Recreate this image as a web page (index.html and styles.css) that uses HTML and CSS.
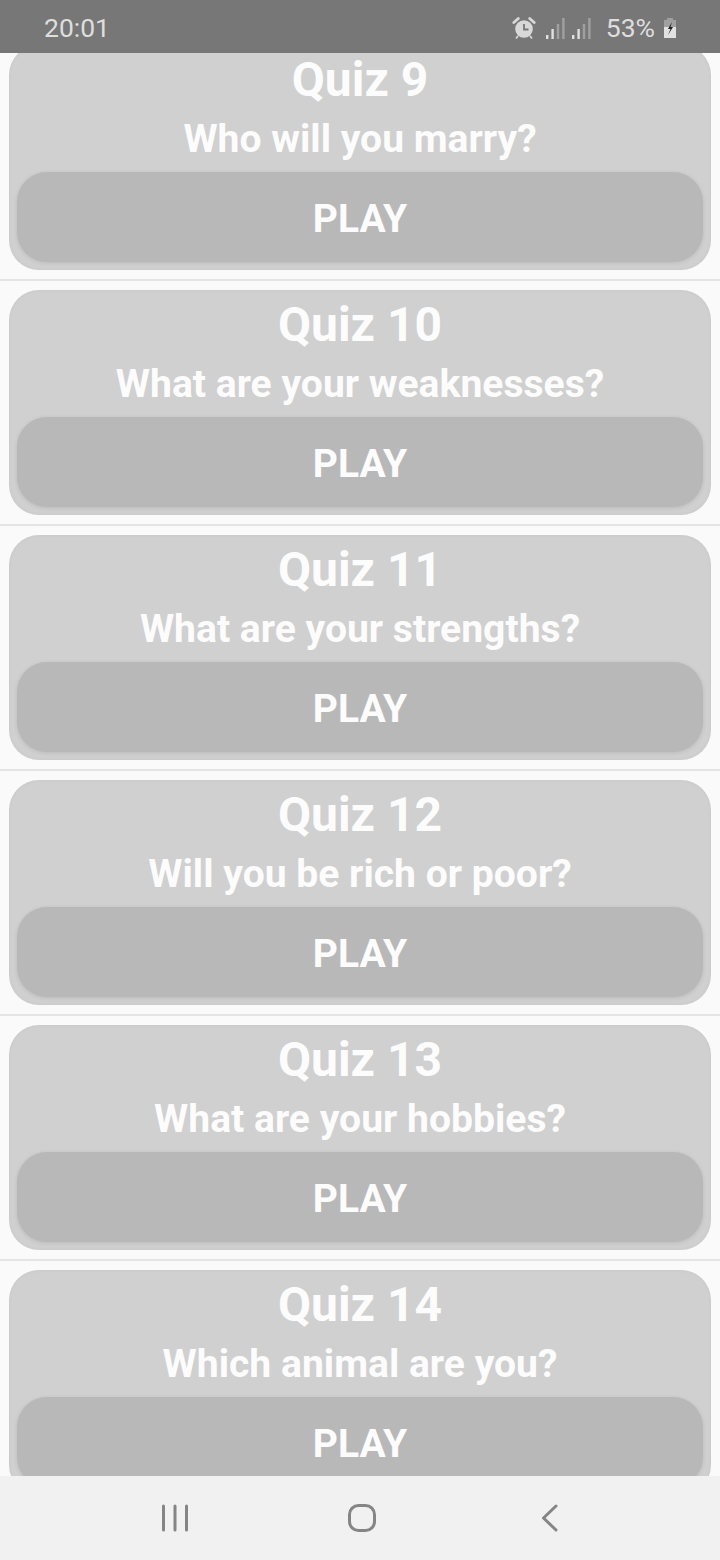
FILE: index.html
```html
<!DOCTYPE html>
<html lang="en">
<head>
    <meta charset="UTF-8">
    <meta name="viewport" content="width=device-width, initial-scale=1.0">
    <title>Quiz</title>
    <link rel="stylesheet" href="styles.css">
</head>
<body>

    <div class="status-bar">
        <span class="clock">20:01</span>
        <div class="status-icons">
            <svg class="alarm" width="24" height="24" viewBox="0 0 24 24">
                <circle cx="12" cy="13" r="8.8" fill="#d8d8d8"/>
                <path d="M12 8v5.5h4.5" fill="none" stroke="#777" stroke-width="1.8"/>
                <path d="M1.8 6.5l4.5-4M22.2 6.5l-4.5-4" stroke="#d8d8d8" stroke-width="2.8" stroke-linecap="round"/>
                <path d="M6 20l-2 2.5M18 20l2 2.5" stroke="#d8d8d8" stroke-width="1.8"/>
            </svg>
            <svg class="signal" width="20" height="22" viewBox="0 0 20 22">
                <rect x="1" y="18" width="2.4" height="4" fill="#e0e0e0"/>
                <rect x="6.4" y="12" width="2.4" height="10" fill="#e0e0e0"/>
                <rect x="11.8" y="7" width="2.4" height="15" fill="#a0a0a0"/>
                <rect x="17.2" y="1" width="2.4" height="21" fill="#a0a0a0"/>
            </svg>
            <svg class="signal" width="20" height="22" viewBox="0 0 20 22">
                <rect x="1" y="18" width="2.4" height="4" fill="#e0e0e0"/>
                <rect x="6.4" y="12" width="2.4" height="10" fill="#e0e0e0"/>
                <rect x="11.8" y="7" width="2.4" height="15" fill="#a0a0a0"/>
                <rect x="17.2" y="1" width="2.4" height="21" fill="#a0a0a0"/>
            </svg>
            <span class="percent">53%</span>
            <svg class="battery" width="14" height="22" viewBox="0 0 14 22">
                <path d="M4 1h6v2h3v18H1V3h3z" fill="#a0a0a0"/>
                <rect x="1" y="10" width="12" height="11" fill="#e2e2e2"/>
                <path d="M9 5L5 12h2.5L5 18l5-8H7.5z" fill="#222"/>
            </svg>
        </div>
    </div>

    <div class="quiz-list">
        <div class="quiz-item">
            <div class="quiz-card">
                <h1>Quiz 9</h1>
                <h2>Who will you marry?</h2>
                <div class="play-btn">PLAY</div>
            </div>
        </div>
        <div class="quiz-item">
            <div class="quiz-card">
                <h1>Quiz 10</h1>
                <h2>What are your weaknesses?</h2>
                <div class="play-btn">PLAY</div>
            </div>
        </div>
        <div class="quiz-item">
            <div class="quiz-card">
                <h1>Quiz 11</h1>
                <h2>What are your strengths?</h2>
                <div class="play-btn">PLAY</div>
            </div>
        </div>
        <div class="quiz-item">
            <div class="quiz-card">
                <h1>Quiz 12</h1>
                <h2>Will you be rich or poor?</h2>
                <div class="play-btn">PLAY</div>
            </div>
        </div>
        <div class="quiz-item">
            <div class="quiz-card">
                <h1>Quiz 13</h1>
                <h2>What are your hobbies?</h2>
                <div class="play-btn">PLAY</div>
            </div>
        </div>
        <div class="quiz-item">
            <div class="quiz-card">
                <h1>Quiz 14</h1>
                <h2>Which animal are you?</h2>
                <div class="play-btn">PLAY</div>
            </div>
        </div>
    </div>

    <div class="nav-bar">
        <svg width="30" height="30" viewBox="0 0 30 30">
            <path d="M3.5 3v24M15 3v24M26.5 3v24" stroke="#858585" stroke-width="3" stroke-linecap="round" fill="none"/>
        </svg>
        <svg width="30" height="30" viewBox="0 0 30 30">
            <rect x="2.5" y="2.5" width="25" height="25" rx="9" stroke="#858585" stroke-width="3" fill="none"/>
        </svg>
        <svg width="30" height="30" viewBox="0 0 30 30">
            <path d="M22 3L9.5 15 22 27" stroke="#858585" stroke-width="3" stroke-linecap="round" stroke-linejoin="round" fill="none"/>
        </svg>
    </div>

</body>
</html>
```

FILE: styles.css
```css
html, body { margin: 0; padding: 0; }
body {
    width: 720px;
    height: 1560px;
    display: flex;
    flex-direction: column;
    overflow: hidden;
    background-color: #fafafa;
    font-family: Roboto, "Liberation Sans", sans-serif;
}

/* status bar */
.status-bar {
    height: 53px;
    flex: none;
    display: flex;
    align-items: center;
    justify-content: space-between;
    padding: 2px 43px 0 44px;
    box-sizing: border-box;
    background-color: #777777;
    color: #dedede;
    position: relative;
    z-index: 1;
}
.clock { font-size: 26.5px; }
.status-icons { display: flex; align-items: center; }
.alarm { margin-right: 9px; }
.signal { margin-right: 6px; }
.percent { font-size: 26.5px; margin: 0 8px 0 9px; }

/* list */
.quiz-list {
    flex: 1;
    min-height: 0;
    overflow: hidden;
}
.quiz-item {
    padding: 9px;
    border-bottom: 2px solid #e4e4e4;
}
.quiz-item:first-child { margin-top: -17px; }
.quiz-card {
    height: 225px;
    box-sizing: border-box;
    padding: 0 8px;
    border-radius: 30px;
    background-color: #d0d0d0;
    box-shadow: inset 0 0 4px rgba(0, 0, 0, 0.04);
    color: #fcfcfc;
    text-align: center;
    overflow: hidden;
}
h1 {
    margin: 0;
    padding: 10px 0;
    line-height: 49px;
    font-size: 48px;
    font-weight: 700;
}
h2 {
    margin: 0;
    height: 58px;
    line-height: 50px;
    font-size: 39.1px;
    font-weight: 700;
}
.play-btn {
    height: 90px;
    line-height: 94px;
    border-radius: 30px;
    background-color: #b8b8b8;
    box-shadow: 0 1px 4px rgba(0, 0, 0, 0.1);
    font-size: 39px;
    font-weight: 700;
}

/* nav */
.nav-bar {
    height: 84px;
    flex: none;
    display: flex;
    align-items: center;
    justify-content: space-between;
    padding: 0 156px 0 160px;
    box-sizing: border-box;
    background-color: #f1f1f1;
    position: relative;
}
```
